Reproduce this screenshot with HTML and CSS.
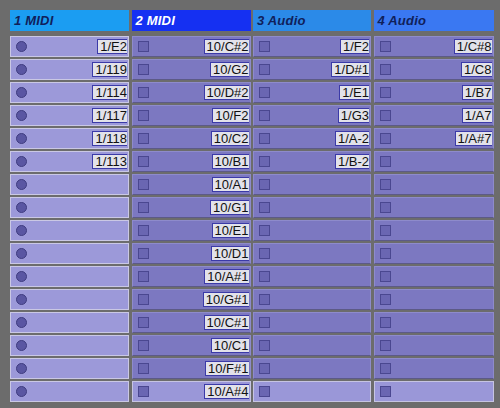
FILE: index.html
```html
<!DOCTYPE html>
<html>
<head>
<meta charset="utf-8">
<link rel="stylesheet" href="styles.css">
</head>
<body>
<div class="session">
  <div class="track midi">
    <div class="head h1">1 MIDI</div>
    <div class="slot"><span class="led"></span><span class="clip">1/E2</span></div>
    <div class="slot"><span class="led"></span><span class="clip">1/119</span></div>
    <div class="slot"><span class="led"></span><span class="clip">1/114</span></div>
    <div class="slot"><span class="led"></span><span class="clip">1/117</span></div>
    <div class="slot"><span class="led"></span><span class="clip">1/118</span></div>
    <div class="slot"><span class="led"></span><span class="clip">1/113</span></div>
    <div class="slot"><span class="led"></span></div>
    <div class="slot"><span class="led"></span></div>
    <div class="slot"><span class="led"></span></div>
    <div class="slot"><span class="led"></span></div>
    <div class="slot"><span class="led"></span></div>
    <div class="slot"><span class="led"></span></div>
    <div class="slot"><span class="led"></span></div>
    <div class="slot"><span class="led"></span></div>
    <div class="slot"><span class="led"></span></div>
    <div class="slot"><span class="led"></span></div>
  </div>
  <div class="track">
    <div class="head h2">2 MIDI</div>
    <div class="slot"><span class="stop"></span><span class="clip">10/C#2</span></div>
    <div class="slot"><span class="stop"></span><span class="clip">10/G2</span></div>
    <div class="slot"><span class="stop"></span><span class="clip">10/D#2</span></div>
    <div class="slot"><span class="stop"></span><span class="clip">10/F2</span></div>
    <div class="slot"><span class="stop"></span><span class="clip">10/C2</span></div>
    <div class="slot"><span class="stop"></span><span class="clip">10/B1</span></div>
    <div class="slot"><span class="stop"></span><span class="clip">10/A1</span></div>
    <div class="slot"><span class="stop"></span><span class="clip">10/G1</span></div>
    <div class="slot"><span class="stop"></span><span class="clip">10/E1</span></div>
    <div class="slot"><span class="stop"></span><span class="clip">10/D1</span></div>
    <div class="slot"><span class="stop"></span><span class="clip">10/A#1</span></div>
    <div class="slot"><span class="stop"></span><span class="clip">10/G#1</span></div>
    <div class="slot"><span class="stop"></span><span class="clip">10/C#1</span></div>
    <div class="slot"><span class="stop"></span><span class="clip">10/C1</span></div>
    <div class="slot"><span class="stop"></span><span class="clip">10/F#1</span></div>
    <div class="slot last"><span class="stop"></span><span class="clip">10/A#4</span></div>
  </div>
  <div class="track">
    <div class="head h3">3 Audio</div>
    <div class="slot"><span class="stop"></span><span class="clip">1/F2</span></div>
    <div class="slot"><span class="stop"></span><span class="clip">1/D#1</span></div>
    <div class="slot"><span class="stop"></span><span class="clip">1/E1</span></div>
    <div class="slot"><span class="stop"></span><span class="clip">1/G3</span></div>
    <div class="slot"><span class="stop"></span><span class="clip">1/A-2</span></div>
    <div class="slot"><span class="stop"></span><span class="clip">1/B-2</span></div>
    <div class="slot"><span class="stop"></span></div>
    <div class="slot"><span class="stop"></span></div>
    <div class="slot"><span class="stop"></span></div>
    <div class="slot"><span class="stop"></span></div>
    <div class="slot"><span class="stop"></span></div>
    <div class="slot"><span class="stop"></span></div>
    <div class="slot"><span class="stop"></span></div>
    <div class="slot"><span class="stop"></span></div>
    <div class="slot"><span class="stop"></span></div>
    <div class="slot last"><span class="stop"></span></div>
  </div>
  <div class="track">
    <div class="head h4">4 Audio</div>
    <div class="slot"><span class="stop"></span><span class="clip">1/C#8</span></div>
    <div class="slot"><span class="stop"></span><span class="clip">1/C8</span></div>
    <div class="slot"><span class="stop"></span><span class="clip">1/B7</span></div>
    <div class="slot"><span class="stop"></span><span class="clip">1/A7</span></div>
    <div class="slot"><span class="stop"></span><span class="clip">1/A#7</span></div>
    <div class="slot"><span class="stop"></span></div>
    <div class="slot"><span class="stop"></span></div>
    <div class="slot"><span class="stop"></span></div>
    <div class="slot"><span class="stop"></span></div>
    <div class="slot"><span class="stop"></span></div>
    <div class="slot"><span class="stop"></span></div>
    <div class="slot"><span class="stop"></span></div>
    <div class="slot"><span class="stop"></span></div>
    <div class="slot"><span class="stop"></span></div>
    <div class="slot"><span class="stop"></span></div>
    <div class="slot last"><span class="stop"></span></div>
  </div>
</div>
</body>
</html>
```
FILE: styles.css
```css
html, body {
  margin: 0;
  padding: 0;
  background: #6c6c6c;
  font-family: "Liberation Sans", Arial, sans-serif;
  width: 500px;
  height: 408px;
  overflow: hidden;
}

.session {
  display: grid;
  grid-template-columns: 119px 119px 118px 120px;
  column-gap: 2.5px;
  padding: 10px 0 0 10px;
}

.track {
  display: flex;
  flex-direction: column;
  gap: 2px;
}

.head {
  height: 21px;
  margin-bottom: 3px;
  box-sizing: border-box;
  padding: 3px 0 0 4px;
  font-size: 13px;
  font-weight: bold;
  font-style: italic;
  color: #10205a;
  letter-spacing: 0.2px;
}
.h1 { background: #1b9df2; }
.h2 { background: #1530f2; color: #ffffff; }
.h3 { background: #2b8ae8; }
.h4 { background: #3a78f2; }

.slot {
  height: 21px;
  box-sizing: border-box;
  display: flex;
  align-items: center;
  justify-content: space-between;
  padding: 0 1px 0 5px;
  background: #7c78c1;
  border: 1px solid #8e8bcb;
  border-bottom-color: #5c5a86;
}
.midi .slot {
  background: #9c99d9;
  border: 1px solid #cac8e4;
}
.slot.last {
  background: #9a97d8;
  border: 1px solid #c6c4e2;
}

.led {
  width: 11px;
  height: 11px;
  border-radius: 50%;
  background: #5a56a2;
  border: 1px solid #3f3c80;
  box-sizing: border-box;
}

.stop {
  width: 11px;
  height: 11px;
  background: #6a66b2;
  border: 1px solid #4a4790;
  box-sizing: border-box;
}

.clip {
  height: 15px;
  line-height: 14px;
  box-sizing: border-box;
  padding: 0 0 0 2px;
  background: #e2e2ea;
  border: 1px solid #3b3aa8;
  border-right: 0;
  font-size: 13px;
  color: #111111;
}
```
